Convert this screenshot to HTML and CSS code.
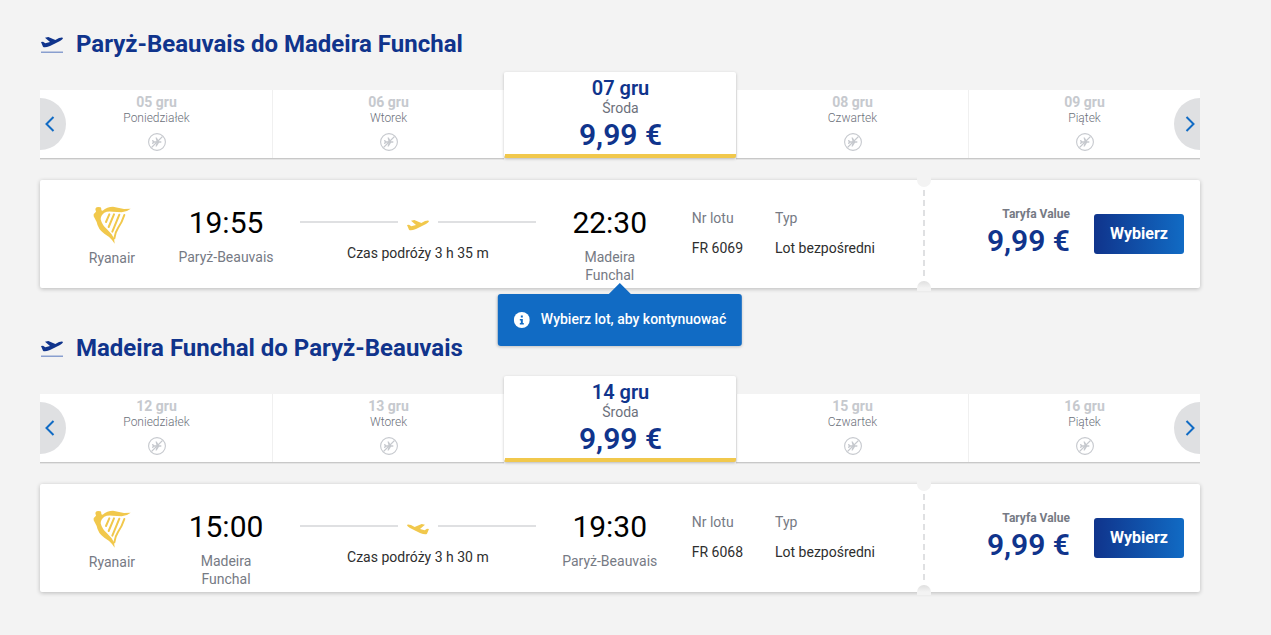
FILE: index.html
```html
<!DOCTYPE html>
<html lang="pl">
<head>
    <meta charset="UTF-8">
    <meta name="viewport" content="width=device-width, initial-scale=1.0">
    <title>Wybierz lot</title>
    <link rel="stylesheet" href="styles.css">
</head>
<body>
    <!-- shared icons -->
    <svg class="sprite" aria-hidden="true">
        <symbol id="takeoff" viewBox="0 0 66 36">
            <path d="M0 18L6 17L13 22L27 18L12 5L22 3L43 12L54 6Q66 2 66 7Q65 11 57 15L27 30Q10 36 6 32Z"/>
        </symbol>
        <symbol id="no-flight" viewBox="0 0 18 18">
            <circle cx="9" cy="9" r="8.4" fill="none" stroke="currentColor" stroke-width="1.1"/>
            <path d="M4 7h1l1.200 1.300h2.300L7.500 4.500h1.200l2.300 3.800h2q1.300.7 0 1.400h-2L8.700 13.500H7.500l1-3.800H6.200L5 11H4l.6-2z" fill="currentColor"/>
            <path d="M3.500 14.500l11-11" stroke="currentColor" stroke-width="1.100"/>
        </symbol>
        <symbol id="harp" viewBox="0 0 114 114">
            <path d="M7 9Q8 3 15 3L23 4Q26 8 25 13L29 14Q42 2 60 2Q80 6 93 9L113 8Q103 17 86 19Q72 18 59 17Q43 15 34 20Q23 28 23 40Q27 57 42 70Q57 84 63 97L65 113L57 102Q48 91 34 83Q15 70 11 48L2 31Q0 23 6 20L9 17Z"/>
            <path d="M49 25L39 48M63 25L47 63M79 26L58 77M94 27Q87 49 75 66Q67 78 64 97" fill="none" stroke="currentColor" stroke-width="6" stroke-linecap="round"/>
        </symbol>
    </svg>

    <main class="flights">
        <section class="journey">
            <h2 class="journey-title">
                <svg class="title-icon" viewBox="0 0 66 51"><use href="#takeoff" width="66" height="36"/><path class="runway" d="M0 47h66v3H0z"/></svg>
                Paryż-Beauvais do Madeira Funchal
            </h2>
            <div class="carousel">
                <button class="arrow prev" aria-label="Poprzednie dni"><svg viewBox="0 0 10 16"><path d="M8.500 1L1.500 8l7 7"/></svg></button>
                <ul class="days">
                    <li><button class="day" disabled><span class="date">05 gru</span><span class="weekday">Poniedziałek</span><svg><use href="#no-flight"/></svg></button></li>
                    <li><button class="day" disabled><span class="date">06 gru</span><span class="weekday">Wtorek</span><svg><use href="#no-flight"/></svg></button></li>
                    <li><button class="day selected"><span class="date">07 gru</span><span class="weekday">Środa</span><span class="price">9,99 €</span></button></li>
                    <li><button class="day" disabled><span class="date">08 gru</span><span class="weekday">Czwartek</span><svg><use href="#no-flight"/></svg></button></li>
                    <li><button class="day" disabled><span class="date">09 gru</span><span class="weekday">Piątek</span><svg><use href="#no-flight"/></svg></button></li>
                </ul>
                <button class="arrow next" aria-label="Następne dni"><svg viewBox="0 0 10 16"><path d="M1.500 1l7 7-7 7"/></svg></button>
            </div>
            <article class="card">
                <div class="info">
                    <div class="airline"><svg><use href="#harp"/></svg>Ryanair</div>
                    <div class="stop"><span class="time">19:55</span><span class="city">Paryż-Beauvais</span></div>
                    <div class="duration">
                        <div class="path"><svg><use href="#takeoff"/></svg></div>
                        Czas podróży 3 h 35 m
                    </div>
                    <div class="stop"><span class="time">22:30</span><span class="city">Madeira Funchal</span></div>
                    <dl class="details">
                        <div><dt>Nr lotu</dt><dd>FR 6069</dd></div>
                        <div><dt>Typ</dt><dd>Lot bezpośredni</dd></div>
                    </dl>
                </div>
                <div class="fare">
                    <div class="fare-price"><span class="fare-name">Taryfa Value</span><span class="price">9,99 €</span></div>
                    <button class="select-button">Wybierz</button>
                </div>
                <div class="tooltip" role="status">
                    <svg viewBox="0 0 16 16"><circle cx="8" cy="8" r="8"/><path d="M7 3.500h2v2H7zM6 7h3v4h1v1.500H6V11h1V8.500H6z"/></svg>
                    <span>Wybierz lot, aby kontynuować</span>
                </div>
            </article>
        </section>

        <section class="journey">
            <h2 class="journey-title">
                <svg class="title-icon" viewBox="0 0 66 51"><use href="#takeoff" width="66" height="36"/><path class="runway" d="M0 47h66v3H0z"/></svg>
                Madeira Funchal do Paryż-Beauvais
            </h2>
            <div class="carousel">
                <button class="arrow prev" aria-label="Poprzednie dni"><svg viewBox="0 0 10 16"><path d="M8.500 1L1.500 8l7 7"/></svg></button>
                <ul class="days">
                    <li><button class="day" disabled><span class="date">12 gru</span><span class="weekday">Poniedziałek</span><svg><use href="#no-flight"/></svg></button></li>
                    <li><button class="day" disabled><span class="date">13 gru</span><span class="weekday">Wtorek</span><svg><use href="#no-flight"/></svg></button></li>
                    <li><button class="day selected"><span class="date">14 gru</span><span class="weekday">Środa</span><span class="price">9,99 €</span></button></li>
                    <li><button class="day" disabled><span class="date">15 gru</span><span class="weekday">Czwartek</span><svg><use href="#no-flight"/></svg></button></li>
                    <li><button class="day" disabled><span class="date">16 gru</span><span class="weekday">Piątek</span><svg><use href="#no-flight"/></svg></button></li>
                </ul>
                <button class="arrow next" aria-label="Następne dni"><svg viewBox="0 0 10 16"><path d="M1.500 1l7 7-7 7"/></svg></button>
            </div>
            <article class="card">
                <div class="info">
                    <div class="airline"><svg><use href="#harp"/></svg>Ryanair</div>
                    <div class="stop"><span class="time">15:00</span><span class="city">Madeira Funchal</span></div>
                    <div class="duration">
                        <div class="path return"><svg><use href="#takeoff"/></svg></div>
                        Czas podróży 3 h 30 m
                    </div>
                    <div class="stop"><span class="time">19:30</span><span class="city">Paryż-Beauvais</span></div>
                    <dl class="details">
                        <div><dt>Nr lotu</dt><dd>FR 6068</dd></div>
                        <div><dt>Typ</dt><dd>Lot bezpośredni</dd></div>
                    </dl>
                </div>
                <div class="fare">
                    <div class="fare-price"><span class="fare-name">Taryfa Value</span><span class="price">9,99 €</span></div>
                    <button class="select-button">Wybierz</button>
                </div>
            </article>
        </section>
    </main>
</body>
</html>
```
FILE: styles.css
```css
* {
    box-sizing: border-box;
}
body {
    margin: 0;
    background: #f3f3f3;
    color: #2e2e2e;
    font-family: Roboto, sans-serif;
    font-size: 14px;
    line-height: 18px;
}
button {
    border: none;
    padding: 0;
    font-family: inherit;
    cursor: pointer;
}
.sprite {
    display: none;
}
.flights {
    display: flex;
    flex-direction: column;
    gap: 44px;
    padding: 28px 71px 42px 40px;
}
.journey-title {
    display: flex;
    align-items: center;
    gap: 13px;
    margin: 0 0 12px 1px;
    color: #10348c;
    font-size: 24px;
    font-weight: 700;
    line-height: 32px;
}
.title-icon {
    width: 22px;
    height: 17px;
    fill: #10348c;
}
.title-icon .runway {
    fill: #5575bd;
}

/* day picker */
.carousel {
    position: relative;
    margin-bottom: 22px;
}
.days {
    display: flex;
    align-items: flex-end;
    margin: 0;
    padding: 0;
    list-style: none;
}
.days li {
    flex: 1;
}
.day {
    display: flex;
    flex-direction: column;
    align-items: center;
    width: 100%;
    height: 68px;
    padding-top: 4px;
    border-left: 1px solid #f0f0f0;
    background: #ffffff;
    box-shadow: 0 1px 0 rgba(0, 0, 0, 0.12), 0 2px 0 rgba(0, 0, 0, 0.06);
    color: #6c717b;
    cursor: default;
}
.days li:first-child .day {
    border-left-color: #ffffff;
}
.date {
    color: #c6c9ce;
    font-size: 14px;
    font-weight: 700;
    line-height: 16px;
}
.weekday {
    font-size: 12px;
    font-weight: 300;
    line-height: 16px;
}
.day svg {
    width: 18px;
    height: 18px;
    margin-top: 7px;
    color: #c6c9ce;
}
.day.selected {
    position: relative;
    height: 86px;
    border-left-color: #ffffff;
    border-bottom: 4px solid #f1c84c;
    border-radius: 2px;
    box-shadow: 0 1px 3px rgba(0, 0, 0, 0.24);
}
.selected .date {
    color: #10348c;
    font-size: 20px;
    font-weight: 600;
    line-height: 24px;
}
.selected .weekday {
    font-size: 14px;
    font-weight: 400;
    line-height: 16px;
}
.price {
    color: #10348c;
    font-size: 30px;
    font-weight: 600;
    line-height: 38px;
}
.arrow {
    position: absolute;
    z-index: 1;
    bottom: 8px;
    display: flex;
    align-items: center;
    width: 26px;
    height: 52px;
    background: #dfe0e2;
}
.arrow svg {
    width: 10px;
    height: 16px;
    fill: none;
    stroke: #116bc4;
    stroke-width: 2;
}
.prev {
    left: 0;
    padding-left: 5px;
    border-radius: 0 26px 26px 0;
}
.next {
    right: 0;
    justify-content: flex-end;
    padding-right: 5px;
    border-radius: 26px 0 0 26px;
}

/* flight card */
.card {
    position: relative;
    display: flex;
    min-height: 108px;
    border-radius: 2px;
    background: #ffffff;
    box-shadow: 0 1px 4px rgba(0, 0, 0, 0.24);
}
.info {
    display: flex;
    flex: 1;
    padding: 24px 49px 0 48px;
    background: repeating-linear-gradient(#dfe0e2 0 6px, transparent 6px 10px) right 10px / 1px 88px no-repeat;
}
.airline {
    display: flex;
    flex-direction: column;
    align-items: center;
    gap: 5px;
    width: 48px;
    margin-right: 42px;
    padding-top: 2px;
    color: #767a84;
}
.airline svg {
    width: 38px;
    height: 38px;
    color: #f1c84c;
    fill: #f1c84c;
}
.stop {
    display: flex;
    flex-direction: column;
    align-items: center;
    gap: 6px;
    width: 96px;
    text-align: center;
}
.time {
    color: #000000;
    font-size: 30px;
    line-height: 38px;
}
.city {
    color: #767a84;
}
.duration {
    flex: 1;
    margin: 0 26px;
    padding-top: 15px;
    text-align: center;
}
.path {
    display: flex;
    align-items: center;
    gap: 8px;
    margin-bottom: 13px;
}
.path::before,
.path::after {
    content: "";
    flex: 1;
    height: 2px;
    margin-bottom: 6px;
    background: #dfe0e2;
}
.path svg {
    width: 24px;
    height: 12px;
    fill: #f1c84c;
}
.return svg {
    transform: scaleX(-1);
}
.details {
    display: flex;
    gap: 32px;
    margin: 5px 0 0 34px;
    white-space: nowrap;
}
.details dt {
    margin-bottom: 12px;
    color: #767a84;
}
.details dd {
    margin: 0;
}
.fare {
    position: relative;
    display: flex;
    align-items: center;
    justify-content: flex-end;
    gap: 24px;
    width: 276px;
    padding-right: 16px;
    background: repeating-linear-gradient(#dfe0e2 0 6px, transparent 6px 10px) left 10px / 1px 88px no-repeat;
}
/* ticket notches */
.fare::before,
.fare::after {
    content: "";
    position: absolute;
    left: -7px;
    width: 14px;
    height: 10px;
    background: #f3f3f3;
}
.fare::before {
    top: -3px;
    border-radius: 0 0 7px 7px;
}
.fare::after {
    bottom: -3px;
    border-radius: 7px 7px 0 0;
    background: linear-gradient(#dfdfdf, #f3f3f3 70%);
}
.fare-price {
    display: flex;
    flex-direction: column;
    align-items: flex-end;
    padding-bottom: 2px;
}
.fare-name {
    color: #767a84;
    font-size: 12px;
    font-weight: 700;
    line-height: 16px;
}
.select-button {
    width: 90px;
    height: 40px;
    padding-bottom: 2px;
    border-radius: 3px;
    background: linear-gradient(90deg, #10348c, #116bc4);
    color: #ffffff;
    font-size: 16px;
    font-weight: 700;
}
.tooltip {
    position: absolute;
    top: calc(100% + 6px);
    left: 50%;
    display: flex;
    align-items: center;
    gap: 11px;
    height: 52px;
    padding: 0 16px;
    border-radius: 3px;
    background: #116bc4;
    box-shadow: 0 1px 3px rgba(0, 0, 0, 0.2);
    color: #ffffff;
    font-weight: 500;
    white-space: nowrap;
    transform: translateX(-50%);
}
.tooltip::before {
    content: "";
    position: absolute;
    bottom: 100%;
    left: 50%;
    border: 11px solid transparent;
    border-top: none;
    border-bottom-color: #116bc4;
    transform: translateX(-50%);
}
.tooltip span {
    padding-bottom: 2px;
}
.tooltip svg {
    width: 16px;
    height: 16px;
    fill: #ffffff;
}
.tooltip path {
    fill: #116bc4;
}
```
